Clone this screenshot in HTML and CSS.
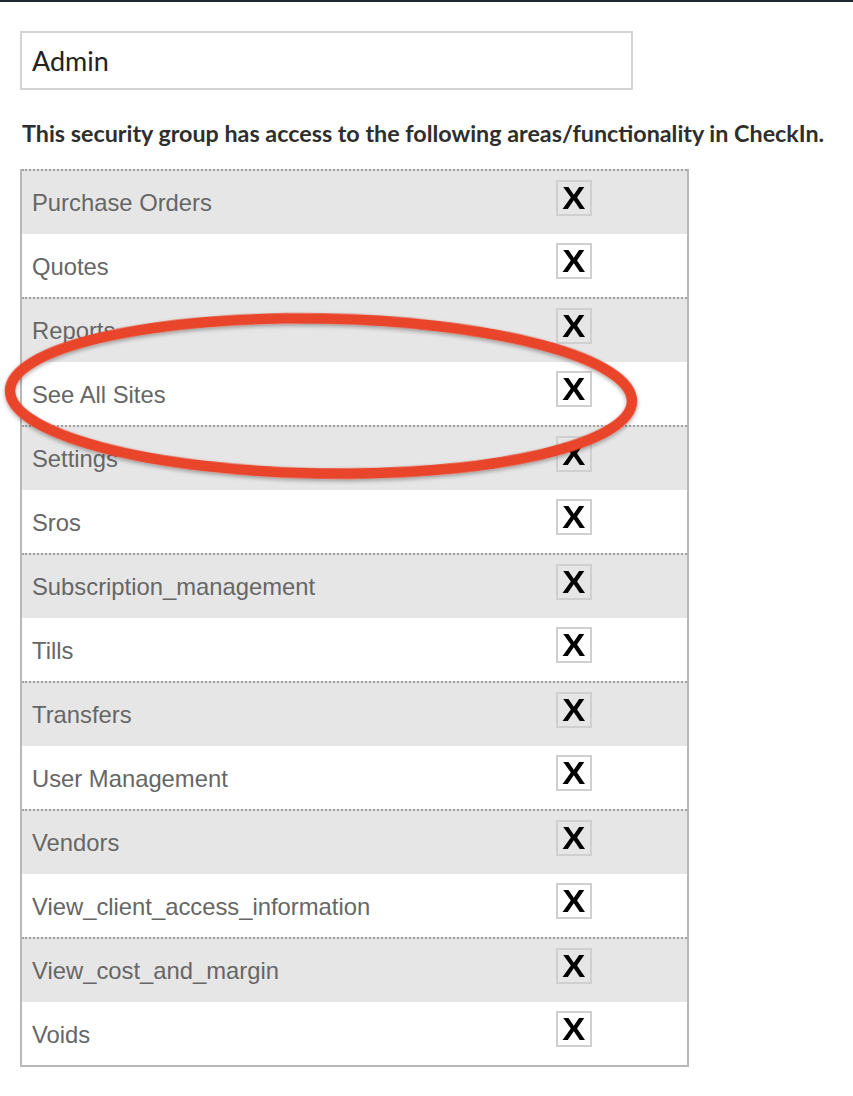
FILE: index.html
```html
<!DOCTYPE html>
<html>
<head>
<meta charset="utf-8">
<link rel="stylesheet" href="styles.css">
</head>
<body>
<div class="topbar"></div>
<main class="page">
  <div class="name-input">Admin</div>
  <p class="intro">This security group has access to the following areas/functionality in CheckIn.</p>
  <div class="perm-wrap">
    <div class="perm-table">
      <div class="row odd"><span class="label">Purchase Orders</span><span class="check"><span class="mark">X</span></span></div>
      <div class="row"><span class="label">Quotes</span><span class="check"><span class="mark">X</span></span></div>
      <div class="row odd"><span class="label">Reports</span><span class="check"><span class="mark">X</span></span></div>
      <div class="row"><span class="label">See All Sites</span><span class="check"><span class="mark">X</span></span></div>
      <div class="row odd"><span class="label">Settings</span><span class="check"><span class="mark">X</span></span></div>
      <div class="row"><span class="label">Sros</span><span class="check"><span class="mark">X</span></span></div>
      <div class="row odd"><span class="label">Subscription_management</span><span class="check"><span class="mark">X</span></span></div>
      <div class="row"><span class="label">Tills</span><span class="check"><span class="mark">X</span></span></div>
      <div class="row odd"><span class="label">Transfers</span><span class="check"><span class="mark">X</span></span></div>
      <div class="row"><span class="label">User Management</span><span class="check"><span class="mark">X</span></span></div>
      <div class="row odd"><span class="label">Vendors</span><span class="check"><span class="mark">X</span></span></div>
      <div class="row"><span class="label">View_client_access_information</span><span class="check"><span class="mark">X</span></span></div>
      <div class="row odd"><span class="label">View_cost_and_margin</span><span class="check"><span class="mark">X</span></span></div>
      <div class="row"><span class="label">Voids</span><span class="check"><span class="mark">X</span></span></div>
    </div>
    <svg class="highlight" width="660" height="190" viewBox="0 0 660 190">
      <defs>
        <filter id="sh" x="-5%" y="-10%" width="110%" height="125%">
          <feDropShadow dx="0" dy="2" stdDeviation="2" flood-color="#000" flood-opacity="0.35"/>
        </filter>
      </defs>
      <ellipse cx="328" cy="92" rx="311" ry="77.5" transform="rotate(1.0 328 92)" fill="none" stroke="#e8442a" stroke-width="10.5" filter="url(#sh)"/>
    </svg>
  </div>
</main>
</body>
</html>
```
FILE: styles.css
```css
html, body {
  margin: 0;
  padding: 0;
  background: #ffffff;
}
.topbar {
  height: 2px;
  background: #1e2832;
}
.page {
  padding: 29px 0 0 20px;
  font-family: "Liberation Sans", Arial, sans-serif;
}
.name-input {
  box-sizing: border-box;
  width: 613px;
  height: 59px;
  border: 2px solid #d3d3d3;
  padding: 0 10px;
  display: flex;
  align-items: center;
  font-family: Lato, "Liberation Sans", sans-serif;
  font-size: 27px;
  color: #222;
}
.intro {
  margin: 29px 0 0 2px;
  font-family: Lato, "Liberation Sans", sans-serif;
  font-weight: 700;
  font-size: 23.3px;
  color: #2e2e2e;
  line-height: 28px;
}
.perm-wrap {
  position: relative;
  margin-top: 22px;
  margin-left: -15px;
  padding-left: 15px;
}
.perm-table {
  box-sizing: border-box;
  width: 669px;
  border: 2px solid #b8b8b8;
  border-top: none;
}
.row {
  display: grid;
  grid-template-columns: 1fr 131px;
  height: 63px;
  box-sizing: border-box;
  background: #fff;
}
.row.odd {
  height: 65px;
  background: #e6e6e6;
  border-top: 2px dotted #a0a0a0;
}
.label {
  align-self: center;
  padding-left: 10px;
  padding-top: 2px;
  font-size: 23.8px;
  color: #666;
}
.row.odd .label {
  padding-top: 0;
}
.check {
  box-sizing: border-box;
  width: 36px;
  height: 36px;
  margin-top: 9px;
  border: 2px solid #cfcfcf;
  display: flex;
  align-items: center;
  justify-content: center;
  color: #000;
  line-height: 1;
}
.mark {
  display: inline-block;
  font-size: 32px;
  font-weight: 700;
  transform: scaleX(1.08);
}
.highlight {
  position: absolute;
  left: -12px;
  top: 135px;
  pointer-events: none;
}
```
